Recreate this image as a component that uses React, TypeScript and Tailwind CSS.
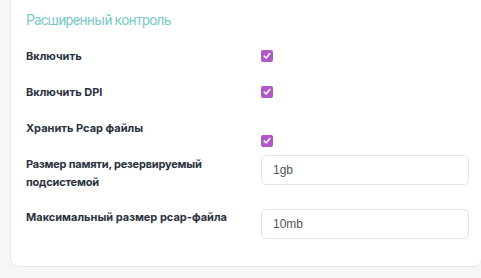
import React from "react";

function Check() {
  return (
    <span className="flex h-[12px] w-[12px] items-center justify-center rounded-[2px] bg-[#b058c8]">
      <svg width="8" height="8" viewBox="0 0 8 8" fill="none">
        <path d="M1.2 4.2 L3.2 6 L6.8 1.6" stroke="white" strokeWidth="1.6" strokeLinecap="round" strokeLinejoin="round" />
      </svg>
    </span>
  );
}

function Input({ value }: { value: string }) {
  return (
    <div className="flex h-[30px] w-[208px] items-center rounded-[5px] border border-[#e3e3e6] bg-white pl-[11px] text-[12px] font-normal text-[#555] font-['Liberation_Sans',sans-serif]">
      {value}
    </div>
  );
}

export default function App() {
  return (
    <div className="h-[278px] w-[481px] overflow-hidden bg-[#f5f6f8] font-['Inter',sans-serif]">
      <div className="ml-[10px] h-[267px] rounded-b-[8px] border-b border-l border-[#e6e7ea] bg-white pl-[15px] pt-[10px]">
        <div className="text-[14px] leading-[20px] tracking-[-0.7px] text-[#7ccac7] font-['Roboto',sans-serif]">Расширенный контроль</div>
        <div className="mt-[18px] text-[11px] font-bold text-[#2a3240]">
          <div className="flex h-[16px] items-center">
            <div className="w-[235px]">Включить</div>
            <Check />
          </div>
          <div className="mt-[20px] flex h-[16px] items-center">
            <div className="w-[235px]">Включить DPI</div>
            <Check />
          </div>
          <div className="mt-[20px] flex h-[30px] items-start">
            <div className="w-[235px] leading-[16px]">Хранить Pcap файлы</div>
            <div className="mt-[15px]"><Check /></div>
          </div>
          <div className="mt-[5px] flex items-start">
            <div className="w-[235px] leading-[18px] tracking-[-0.2px]">Размер памяти, резервируемый<br />подсистемой</div>
            <Input value="1gb" />
          </div>
          <div className="mt-[18px] flex items-start">
            <div className="w-[235px] leading-[16px]">Максимальный размер pcap-файла</div>
            <Input value="10mb" />
          </div>
        </div>
      </div>
    </div>
  );
}
